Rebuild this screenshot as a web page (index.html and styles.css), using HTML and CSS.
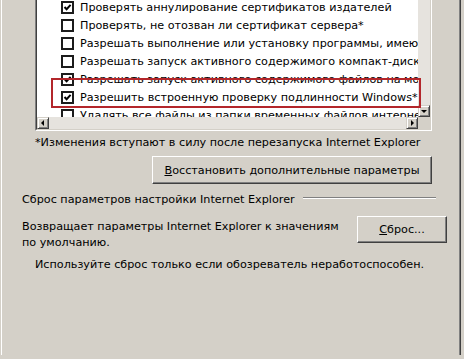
FILE: index.html
```html
<!DOCTYPE html>
<html lang="ru">
<head>
<meta charset="utf-8">
<title>Дополнительно</title>
<link rel="stylesheet" href="styles.css">
</head>
<body>
<div class="tab">
  <div class="listbox">
    <div class="lb-inner">
      <div class="lb-main">
        <div class="lb-rows">
          <div class="row"><span class="cb"><svg viewBox="0 0 9 9"><path d="M1.5 4 L3.6 6.2 L7.6 1.8"/></svg></span><span class="lbl">Проверять аннулирование сертификатов издателей</span></div>
          <div class="row"><span class="cb"></span><span class="lbl">Проверять, не отозван ли сертификат сервера*</span></div>
          <div class="row"><span class="cb"></span><span class="lbl">Разрешать выполнение или установку программы, имеющей недопустимую подпись</span></div>
          <div class="row"><span class="cb"></span><span class="lbl">Разрешать запуск активного содержимого компакт-дисков на моем компьютере*</span></div>
          <div class="row"><span class="cb"><svg viewBox="0 0 9 9"><path d="M1.5 4 L3.6 6.2 L7.6 1.8"/></svg></span><span class="lbl">Разрешать запуск активного содержимого файлов на моем компьютере*</span></div>
          <div class="row"><span class="cb"><svg viewBox="0 0 9 9"><path d="M1.5 4 L3.6 6.2 L7.6 1.8"/></svg></span><span class="lbl">Разрешить встроенную проверку подлинности Windows*</span></div>
          <div class="row"><span class="cb"></span><span class="lbl">Удалять все файлы из папки временных файлов интернета при закрытии</span></div>
        </div>
        <div class="vscroll">
          <div class="vtrack"></div>
          <div class="sbtn"><svg viewBox="0 0 10 10"><path d="M2 4 L8 4 L5 7 Z"/></svg></div>
        </div>
      </div>
      <div class="hscroll">
        <div class="sbtn"><svg viewBox="0 0 10 10"><path d="M6 2 L6 8 L3 5 Z"/></svg></div>
        <div class="htrack"></div>
        <div class="sbtn"><svg viewBox="0 0 10 10"><path d="M4 2 L4 8 L7 5 Z"/></svg></div>
        <div class="corner"></div>
      </div>
    </div>
  </div>

  <p class="note">*Изменения вступают в силу после перезапуска Internet Explorer</p>

  <div class="btn-row">
    <button class="btn btn-wide"><u>В</u>осстановить дополнительные параметры</button>
  </div>

  <div class="group-head">
    <span class="group-title">Сброс параметров настройки Internet Explorer</span>
    <span class="etch"></span>
  </div>

  <div class="reset-row">
    <p class="reset-text">Возвращает параметры Internet Explorer к значениям<br>по умолчанию.</p>
    <button class="btn btn-reset"><u>С</u>брос...</button>
  </div>

  <p class="hint">Используйте сброс только если обозреватель неработоспособен.</p>

  <div class="highlight"></div>
</div>
</body>
</html>
```

FILE: styles.css
```css
html, body {
  margin: 0;
  padding: 0;
  background: #d4d0c8;
  overflow: hidden;
}

body {
  width: 464px;
  height: 359px;
  font-family: "DejaVu Sans", sans-serif;
  font-size: 11.2px;
  color: #000;
}

.tab {
  position: relative;
  margin-left: 1px;
  width: 460px;
  height: 359px;
  box-sizing: border-box;
  border-left: 1px solid #ffffff;
  border-right: 1px solid #404040;
  box-shadow: inset -1px 0 0 #808080;
  padding: 0 13px 0 20px;
}

/* list box */
.listbox {
  margin: -4px 0 0 13px;
  width: 397px;
  box-sizing: border-box;
  border: 1px solid;
  border-color: #808080 #ffffff #ffffff #808080;
}

.lb-inner {
  border: 1px solid;
  border-color: #404040 #d4d0c8 #d4d0c8 #404040;
  background: #fff;
}

.lb-main {
  display: flex;
  height: 119px;
}

.lb-rows {
  flex: 1;
  overflow: hidden;
  background: #fff;
}

.row {
  display: flex;
  align-items: center;
  height: 18px;
  white-space: nowrap;
}

.cb {
  flex: none;
  width: 13px;
  height: 13px;
  box-sizing: border-box;
  margin-left: 24px;
  border: 2px solid #1c1c1c;
  background: #fff;
  display: flex;
}

.cb svg {
  width: 9px;
  height: 9px;
}

.cb path {
  fill: none;
  stroke: #000;
  stroke-width: 2;
}

.lbl {
  margin-left: 6px;
}

.vscroll {
  flex: none;
  width: 12px;
  display: flex;
  flex-direction: column;
}

.vtrack {
  flex: 1;
  background: #e6e3de;
}

.sbtn {
  flex: none;
  width: 12px;
  height: 12px;
  box-sizing: border-box;
  background: #d4d0c8;
  border: 1px solid;
  border-color: #d4d0c8 #404040 #404040 #d4d0c8;
  box-shadow: inset 1px 1px 0 #ffffff, inset -1px -1px 0 #808080;
  display: flex;
  align-items: center;
  justify-content: center;
}

.sbtn svg {
  width: 10px;
  height: 10px;
}

.sbtn path {
  fill: #000;
}

.hscroll {
  display: flex;
  height: 12px;
}

.htrack {
  flex: 1;
  background: #e6e3de;
}

.corner {
  flex: none;
  width: 12px;
  background: #d4d0c8;
}

/* texts */
.note {
  margin: 4px 0 0 13px;
  line-height: 16px;
  white-space: nowrap;
}

.btn-row {
  display: flex;
  justify-content: flex-end;
  margin: 5px 15px 0 0;
}

.btn {
  font-family: "DejaVu Sans", sans-serif;
  font-size: 11.2px;
  color: #000;
  background: #d4d0c8;
  border: 1px solid;
  border-color: #ffffff #404040 #404040 #ffffff;
  box-shadow: inset -1px -1px 0 #808080;
  padding: 0;
  margin: 0;
  box-sizing: border-box;
}

.btn-wide {
  width: 280px;
  height: 28px;
}

.group-head {
  display: flex;
  align-items: center;
  margin: 7px 11px 0 0;
  height: 16px;
}

.group-title {
  white-space: nowrap;
}

.etch {
  flex: 1;
  margin-left: 8px;
  height: 0;
  border-top: 1px solid #808080;
  border-bottom: 1px solid #ffffff;
  margin-top: -2px;
}

.reset-row {
  display: flex;
  justify-content: space-between;
  align-items: flex-start;
  margin-top: 12px;
}

.reset-text {
  margin: 0;
  line-height: 16px;
}

.btn-reset {
  width: 90px;
  height: 27px;
  margin-top: -3px;
}

.hint {
  margin: 6px 0 0 13px;
  line-height: 16px;
  white-space: nowrap;
}

/* annotation overlay */
.highlight {
  position: absolute;
  left: 49px;
  top: 82px;
  width: 370px;
  height: 30px;
  box-sizing: border-box;
  border: 2px solid #b3262b;
  pointer-events: none;
}
```
